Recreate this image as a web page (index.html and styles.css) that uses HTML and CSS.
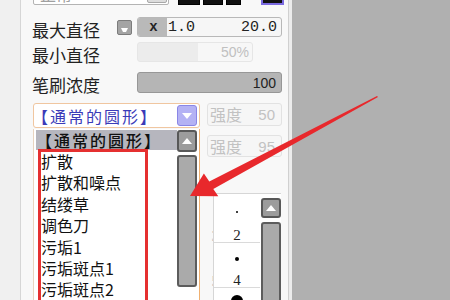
FILE: index.html
```html
<!DOCTYPE html>
<html>
<head>
<meta charset="utf-8">
<link rel="stylesheet" href="styles.css">
</head>
<body>
<div class="app">
  <div class="strip"></div>
  <div class="panel">
    <div class="top-row">
      <div class="mode-box"><span class="mode-text">正常</span><span class="mode-btn"></span></div>
      <div class="swatches"><span class="sw w1"></span><span class="sw w2"></span><span class="sw w3"></span><span class="sw sel"></span></div>
    </div>
    <div class="row r1">
      <span class="label">最大直径</span>
      <span class="mini-btn"><svg width="7" height="4" viewBox="0 0 7 4"><path d="M0 0H7L5 4H2Z" fill="#fff"/></svg></span>
      <div class="field f1"><span class="fx">x</span><span class="fval">1.0</span><span class="fmax">20.0</span></div>
    </div>
    <div class="row r2">
      <span class="label">最小直径</span>
      <div class="field f2"><span class="fmax">50%</span></div>
    </div>
    <div class="row r3">
      <span class="label">笔刷浓度</span>
      <div class="field f3"><span class="fmax">100</span></div>
    </div>
    <div class="row r4">
      <div class="combo">
        <span class="combo-text">【通常的圆形】</span>
        <span class="combo-btn"><svg width="10" height="6" viewBox="0 0 10 6"><path d="M0 0H10L5 6Z" fill="#fff"/></svg></span>
      </div>
      <div class="strength"><span>强度</span><span>50</span></div>
    </div>
    <div class="lower">
      <div class="list">
        <div class="items">
          <div class="item sel">【通常的圆形】</div>
          <div class="item">扩散</div>
          <div class="item">扩散和噪点</div>
          <div class="item">结缕草</div>
          <div class="item">调色刀</div>
          <div class="item">污垢1</div>
          <div class="item">污垢斑点1</div>
          <div class="item">污垢斑点2</div>
        </div>
        <div class="lscroll">
          <div class="lup"><svg width="10" height="6" viewBox="0 0 10 6"><path d="M0 6H10L5 0Z" fill="#fff"/></svg></div>
          <div class="lthumb"></div>
        </div>
      </div>
      <div class="side">
        <div class="strength s2"><span>强度</span><span>95</span></div>
        <div class="table">
          <div class="tcut">
            <div class="cell c1"><div class="dotarea"></div><div class="num">3</div></div>
            <div class="cell c2"><div class="dotarea"></div><div class="num">5</div></div>
          </div>
          <div class="tbox">
            <div class="tcol">
              <div class="cell c1"><div class="dotarea"><span class="dot d1"></span></div><div class="num">2</div></div>
              <div class="cell c2"><div class="dotarea"><span class="dot d2"></span></div><div class="num">4</div></div>
              <div class="cell c3"><div class="dotarea"><span class="dot d3"></span></div></div>
            </div>
            <div class="tscroll">
              <div class="tup"><svg width="10" height="6" viewBox="0 0 10 6"><path d="M0 6H10L5 0Z" fill="#fff"/></svg></div>
              <div class="tthumb"></div>
            </div>
          </div>
        </div>
      </div>
    </div>
  </div>
  <div class="gap"></div>
  <div class="canvas"></div>
</div>
<div class="redbox"></div>
<svg class="arrow" width="450" height="300" viewBox="0 0 450 300">
  <polygon points="377,96 378,97 213.3,188.9 218.3,196.3 190,196 203.9,173.4 209.3,181.4" fill="#e8282c"/>
</svg>
</body>
</html>
```
FILE: styles.css
```css
* { box-sizing: border-box; margin: 0; padding: 0; }
html, body { width: 450px; height: 300px; overflow: hidden; }
body {
  background: #b0b0b0;
  font-family: "Noto Sans CJK SC", "Noto Sans", sans-serif;
  position: relative;
  color: #222;
}
.app { display: flex; height: 300px; }
.strip { width: 21px; flex: none; background: #f0f0f0; border-right: 1px solid #d6d6d6; }
.panel {
  width: 268px; flex: none; background: #f8f8f8;
  padding-left: 11px; border-right: 1px solid #d0d0d0;
  overflow: hidden;
}
.gap { width: 3px; flex: none; background: #ececec; }
.canvas { flex: 1; background: #b0b0b0; }

/* top row */
.top-row { display: flex; height: 22px; margin-top: -17px; }
.mode-box {
  margin-left: 1px; width: 136px; border: 1px solid #b4b4b4; border-radius: 2px;
  background: #fff; display: flex; align-items: center; justify-content: space-between;
  padding: 0 1px 0 6px;
}
.mode-text { font-size: 16px; color: #a0a0a0; line-height: 20px; }
.mode-btn { width: 20px; height: 18px; background: #dcdcdc; border: 1px solid #a8a8a8; border-radius: 2px; }
.swatches { display: flex; margin-left: 9px; gap: 3px; }
.sw { height: 22px; background: #111; border: 1px solid #000; }
.w1 { width: 22px; }
.w2 { width: 20px; }
.w3 { width: 15px; }
.sw.sel { width: 23px; margin-left: 17px; border: 2px solid #7a6ae0; background: #111; }

/* rows */
.row { display: flex; align-items: center; }
.label { width: 85px; flex: none; font-size: 17px; line-height: 20px; color: #222; margin-top: 5px; }
.mini-btn {
  width: 15px; height: 15px; flex: none; margin-right: 5px;
  background: #a4a4a4; border: 1px solid #7c7c7c; border-radius: 2px;
  display: flex; align-items: flex-end; justify-content: center; padding-bottom: 2px;
}
.mini-btn svg { display: block; }
.field {
  display: flex; align-items: center; border-radius: 3px; height: 20px;
  font-family: "Liberation Mono", monospace; font-size: 15px; overflow: hidden;
}
.fmax { margin-left: auto; padding-right: 4px; }
.r1 { margin-top: 12px; height: 20px; }
.f1 { width: 145px; border: 1px solid #b8b8b8; background: #f6f6f6; color: #222; }
.fx { width: 29px; height: 100%; background: #b9b9b9; font-weight: bold; text-align: center; line-height: 18px; font-size: 14px; padding-left: 2px; }
.fval { margin-left: 1px; font-size: 15px; }
.r2 { margin-top: 5px; height: 20px; }
.f2 {
  width: 116px; margin-left: 20px; border: 1px solid #e6e6e6;
  background: linear-gradient(to right, #ececec 0 60px, #f7f7f7 60px);
  color: #c0c0c0; font-family: "Liberation Sans", sans-serif; font-size: 14px;
}
.f2 .fmax { padding-right: 3px; }
.r3 { margin-top: 10px; height: 21px; }
.f3 {
  width: 145px; height: 21px; margin-left: 20px; background: #b5b5b5; border: 1px solid #979797;
  color: #222; font-family: "Liberation Sans", sans-serif; font-size: 14px;
}
.f3 .fmax { padding-right: 5px; }

/* combo row */
.r4 { margin-top: 10px; height: 25px; align-items: stretch; }
.combo {
  margin-left: 1px; width: 167px; border: 1px solid #f0c6a0; border-radius: 3px; background: #fff;
  display: flex; align-items: center; justify-content: space-between; padding-right: 2px;
}
.combo-text { font-size: 16px; color: #3b3bb8; line-height: 22px; margin-left: -2px; letter-spacing: 2px; white-space: nowrap; }
.combo-btn {
  width: 20px; height: 21px; flex: none; background: #b4b2f4; border: 1px solid #8a86e6; border-radius: 3px;
  display: flex; align-items: center; justify-content: center;
}
.strength {
  margin-left: 7px; width: 75px; height: 23px; border: 1px solid #e2e2e2; border-radius: 3px;
  background: #f6f6f6; color: #c2c2c2; font-size: 16px; line-height: 21px;
  display: flex; justify-content: space-between; padding: 0 6px 0 2px;
}
.strength span:last-child { font-family: "Liberation Sans", sans-serif; font-size: 15px; }

/* lower */
.lower { display: flex; margin-top: 1px; height: 171px; }
.list {
  margin-left: 1px; width: 167px; flex: none; height: 171px; overflow: hidden;
  border-left: 1px solid #e8d4c0; border-right: 1px solid #f0b070; background: #fff;
  display: flex;
}
.items { flex: 1; padding-left: 2px; overflow: hidden; }
.item { font-size: 16px; line-height: 21.4px; padding-left: 5px; color: #111; white-space: nowrap; }
.item.sel { background: #b6b6be; height: 20px; line-height: 20px; margin-top: 1px; padding-left: 0; margin-bottom: 1px; letter-spacing: 2px; font-weight: 500; }
.lscroll { width: 20px; flex: none; margin-right: 2px; }
.lup {
  margin-top: 1px; height: 22px; border: 2px solid #585858; border-radius: 3px; background: #9c9c9c;
  display: flex; align-items: center; justify-content: center;
}
.lthumb { margin-top: 3px; height: 132px; border: 2px solid #5c5c5c; border-radius: 3px; background: #aaaaaa; }

.side { flex: 1; }
.s2 { margin-top: 6px; height: 22px; }
.table { display: flex; margin-top: 36px; height: 107px; overflow: hidden; }
.tcut { width: 13px; flex: none; overflow: hidden; padding-top: 1px; }
.tbox { display: flex; border-left: 1px solid #d6d6d6; border-top: 1px solid #d6d6d6; width: 68px; background: #fff; }
.tcol { width: 46px; flex: none; }
.cell { display: flex; flex-direction: column; }
.tcol .c1, .tcol .c2 { border-bottom: 1px solid #dadada; }
.c1 { height: 49px; }
.c2 { height: 45px; }
.c3 { height: 12px; overflow: hidden; }
.dotarea { flex: 1; display: flex; align-items: center; justify-content: center; }
.num {
  font-family: "Liberation Serif", serif; font-size: 15px; line-height: 12px; height: 12px;
  text-align: center; margin-bottom: 1px; color: #222;
}
.tcut .num { text-align: right; margin-right: -6px; color: #b8b8b8; }
.dot { display: block; background: #000; border-radius: 50%; }
.d1 { width: 2px; height: 2px; }
.d2 { width: 4px; height: 4px; }
.d3 { width: 12px; height: 12px; margin-top: 7px; flex: none; }
.c3 .dotarea { align-items: flex-start; }
.tscroll { width: 20px; flex: none; margin-left: 1px; padding-top: 4px; }
.tup {
  height: 20px; border: 2px solid #585858; border-radius: 3px; background: #9c9c9c;
  display: flex; align-items: center; justify-content: center;
}
.tthumb { margin-top: 4px; height: 100px; border: 2px solid #5c5c5c; border-radius: 3px; background: #aaaaaa; }

/* annotations */
.redbox {
  position: absolute; left: 38px; top: 149px; width: 110px; height: 160px;
  border: 3px solid #e53030;
}
.arrow { position: absolute; left: 0; top: 0; pointer-events: none; }
```
